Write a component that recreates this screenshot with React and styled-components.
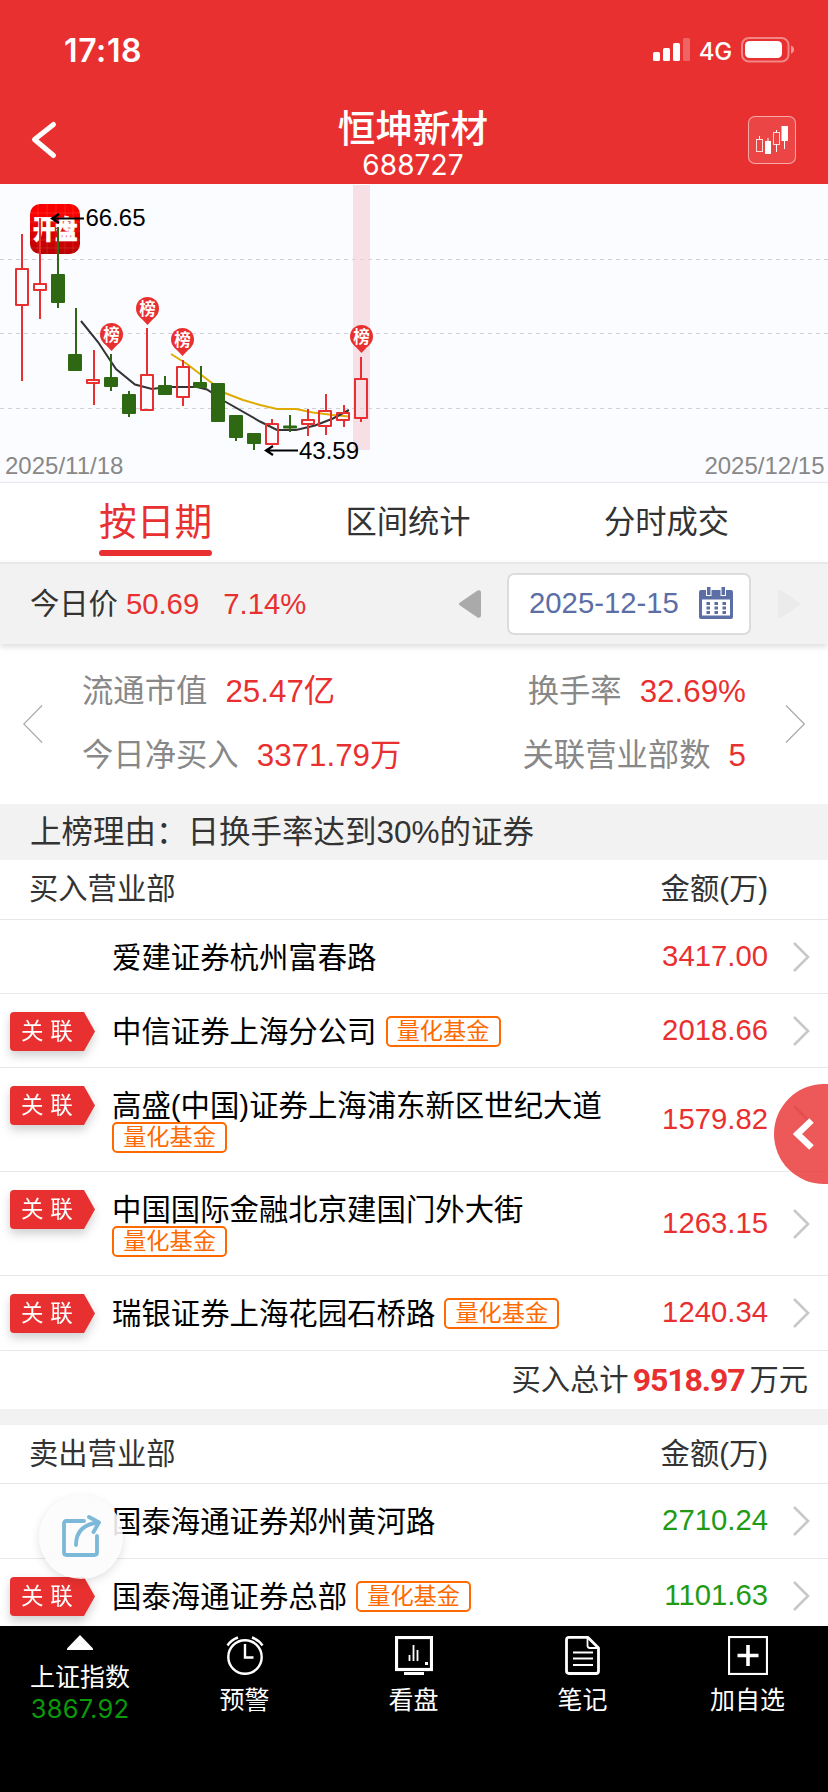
import React from "react";
import styled, { createGlobalStyle } from "styled-components";

const RED = "#e93030";
const GREEN = "#2f6813";
const LATIN = '"Liberation Sans", "Noto Sans CJK SC", sans-serif';
const UI = 'Inter, "Noto Sans CJK SC", sans-serif';

const GlobalStyle = createGlobalStyle`
  * { box-sizing: border-box; }
  body { margin: 0; background: #fff; }
`;

const Page = styled.div`
  position: relative;
  width: 828px;
  height: 1792px;
  overflow: hidden;
  display: flex;
  flex-direction: column;
  background: #fff;
  color: #333;
  font-family: ${LATIN};
  font-size: 29.3px;
  white-space: nowrap;
`;

const Header = styled.header`
  flex: none;
  height: 184px;
  background: ${RED};
  color: #fff;
  font-family: ${UI};
`;

const StatusBar = styled.div`
  display: flex;
  align-items: center;
  justify-content: space-between;
  height: 100px;
  padding: 0 34px 0 64px;
`;

const Clock = styled.div`
  font-size: 32px;
  font-weight: 600;
  letter-spacing: 0.6px;
`;

const StatusIcons = styled.div`
  display: flex;
  align-items: center;
`;

const Network = styled.span`
  margin: 2px 9px 0 8px;
  font-size: 24px;
  font-weight: 500;
  letter-spacing: -0.2px;
`;

const TitleBar = styled.div`
  display: flex;
  align-items: flex-start;
  justify-content: space-between;
  height: 84px;
  padding: 0 32px 0 30px;
`;

const BackIcon = styled.svg`
  margin-top: 20px;
  margin-right: 20px;
`;

const Titles = styled.div`
  text-align: center;
`;

const StockName = styled.div`
  margin-top: 7px;
  font-size: 37.6px;
  font-weight: 500;
  line-height: 44px;
`;

const StockCode = styled.div`
  margin-top: -1px;
  font-size: 28px;
  line-height: 30px;
  letter-spacing: 0.1px;
`;

const ChartButton = styled.button`
  width: 48px;
  height: 48px;
  margin-top: 16px;
  padding: 0;
  border: 1px solid rgba(255, 255, 255, 0.55);
  border-radius: 7px;
  background: rgba(255, 255, 255, 0.1);
`;

const ChartPanel = styled.section`
  flex: none;
  height: 299px;
  background: #fbfcff;
  border-bottom: 1px solid #e6e8ec;
  svg { display: block; }
`;

const Tabs = styled.nav`
  flex: none;
  display: flex;
  justify-content: space-between;
  height: 79px;
  padding: 0 99px;
`;

const Tab = styled.div`
  display: flex;
  flex-direction: column;
  height: 73px;
  line-height: ${(p) => (p.$active ? 78 : 80)}px;
  font-size: ${(p) => (p.$active ? 37.7 : 31.25)}px;
  color: ${(p) => (p.$active ? RED : "#333")};
`;

const TabLine = styled.i`
  height: 6px;
  margin-top: -11px;
  border-radius: 3px;
  background: ${RED};
`;

const PriceBar = styled.section`
  flex: none;
  display: flex;
  align-items: center;
  height: 82px;
  padding: 0 28px 0 30px;
  background: #f2f2f2;
  border-top: 2px solid #e8e8e8;
  box-shadow: 0 3px 6px rgba(0, 0, 0, 0.13);
`;

const PriceLabel = styled.span`
  margin-bottom: 6px;
`;

const Price = styled.span`
  margin-left: ${(p) => p.$gap}px;
  margin-bottom: 1px;
  color: ${RED};
`;

const DateBox = styled.div`
  display: flex;
  align-items: center;
  justify-content: space-between;
  width: 244px;
  height: 62px;
  margin: 0 27px 0 26px;
  padding: 0 16px 3px 20px;
  border: 2px solid #dcdcdc;
  border-radius: 7px;
  background: #fff;
  color: #5b6ea5;
`;

const PrevArrow = styled.svg`
  margin-left: auto;
`;

const Stats = styled.section`
  flex: none;
  display: flex;
  align-items: center;
  height: 160px;
  padding: 0 23px;
  font-size: 31.35px;
`;

const StatGrid = styled.div`
  flex: 1;
  display: flex;
  flex-direction: column;
  gap: 24px;
  padding: 0 39px;
  margin-top: -1px;
`;

const StatRow = styled.div`
  display: flex;
  justify-content: space-between;
  line-height: 40px;
`;

const Stat = styled.div`
  display: flex;
  gap: 18px;
  color: #888;
`;

const StatValue = styled.span`
  color: ${RED};
`;

const Reason = styled.div`
  flex: none;
  height: 56px;
  padding-left: 30px;
  background: #f2f2f2;
  font-size: 31.5px;
  line-height: 56px;
`;

const TableHead = styled.div`
  flex: none;
  display: flex;
  justify-content: space-between;
  height: ${(p) => p.$height}px;
  padding: 0 60px 0 29px;
  border-bottom: 1px solid #e8e8e8;
  line-height: 57px;
`;

const Row = styled.div`
  flex: none;
  display: flex;
  height: ${(p) => p.$height}px;
  border-bottom: 1px solid #e8e8e8;
`;

const BadgeSlot = styled.div`
  flex: none;
  width: 112px;
  padding: 18px 0 0 10px;
`;

const BadgeShadow = styled.div`
  width: 85px;
  filter: drop-shadow(0 5px 5px rgba(0, 0, 0, 0.18));
`;

const Badge = styled.div`
  height: 39px;
  padding-left: 11px;
  border-radius: 4px 0 0 4px;
  background: ${RED};
  clip-path: polygon(0 0, 74px 0, 85px 50%, 74px 100%, 0 100%);
  color: #fff;
  font-size: 22.5px;
  line-height: 39px;
  word-spacing: 0.6px;
`;

const Broker = styled.div`
  flex: none;
  width: 510px;
  display: flex;
  flex-wrap: wrap;
  align-content: flex-start;
  align-items: center;
  column-gap: 9px;
  padding-top: 20px;
  color: #000;
  font-size: 29.4px;
`;

const BrokerName = styled.div`
  height: 34px;
  line-height: 36px;
`;

const Tag = styled.div`
  width: 115px;
  height: 31px;
  border: 2px solid #ff6a00;
  border-radius: 5px;
  color: #ff6a00;
  font-size: 23.2px;
  line-height: 27px;
  text-align: center;
`;

const Amount = styled.div`
  flex: 1;
  align-self: center;
  margin-top: -2px;
  text-align: right;
  color: ${(p) => (p.$sell ? "#229b14" : RED)};
`;

const Chevron = styled.svg`
  flex: none;
  align-self: center;
  margin: 0 18px 0 25px;
`;

const Total = styled.div`
  flex: none;
  display: flex;
  justify-content: flex-end;
  height: 58px;
  padding-right: 20px;
  line-height: 58px;
`;

const TotalValue = styled.b`
  margin: 0 5px 0 4px;
  color: ${RED};
  font: 700 32px/58px Roboto, sans-serif;
  letter-spacing: -1.1px;
`;

const Divider = styled.div`
  flex: none;
  height: 16px;
  background: #f2f2f2;
`;

const Listing = styled.main`
  flex: 1;
  min-height: 0;
  overflow: hidden;
  display: flex;
  flex-direction: column;
`;

const Footer = styled.footer`
  flex: none;
  display: grid;
  grid-template-columns: 160px 169px 169px 169px 161px;
  height: 166px;
  background: #000;
  color: #fff;
  font-family: ${UI};
  font-size: 25px;
`;

const FooterItem = styled.div`
  display: flex;
  flex-direction: column;
  align-items: center;
  padding-top: ${(p) => p.$top}px;
  line-height: 30px;
  svg { margin-bottom: ${(p) => p.$gap}px; }
`;

const IndexValue = styled.span`
  margin-top: 2px;
  color: #0a9a0a;
  font-size: 25.5px;
  letter-spacing: 0.2px;
`;

const SideHandle = styled.div`
  position: absolute;
  top: 1084px;
  right: 0;
  display: flex;
  align-items: center;
  width: 54px;
  height: 100px;
  padding-left: 19px;
  border-radius: 50px 0 0 50px;
  background: rgba(233, 48, 48, 0.8);
`;

const ShareButton = styled.div`
  position: absolute;
  top: 1495px;
  left: 39px;
  display: flex;
  align-items: center;
  justify-content: center;
  width: 84px;
  height: 84px;
  padding-bottom: 4px;
  border-radius: 50%;
  background: rgba(252, 252, 252, 0.88);
  box-shadow: 0 3px 10px rgba(0, 0, 0, 0.12);
`;

// x = wick centre, [high, low] = wick, [top, bottom] = body
const candles = [
  [22, 234, 381, 268, 306, 1], [40, 218, 319, 283, 291, 1], [58, 227, 308, 274, 303, 0],
  [76, 308, 371, 354, 371, 0], [94, 350, 405, 379, 384, 1], [111, 354, 391, 377, 387, 0],
  [129, 391, 417, 394, 414, 0], [147, 328, 411, 374, 411, 1], [165, 376, 395, 385, 395, 0],
  [183, 360, 406, 366, 398, 1], [201, 366, 388, 382, 388, 0], [218, 383, 422, 383, 422, 0],
  [236, 415, 441, 415, 438, 0], [254, 433, 450, 433, 444, 0], [272, 419, 445, 423, 445, 1],
  [290, 415, 432, 425.5, 428.5, 0], [308, 409, 436, 419, 425, 1], [326, 394, 435, 410, 427, 1],
  [344, 405, 427, 412, 421, 1], [361, 357, 422, 378, 419, 1],
];

const pins = [[111.5, 335.5], [147.5, 309.5], [182.5, 340.5], [361.5, 337.5]];

function Candle({ data: [x, high, low, top, bottom, up] }) {
  const color = up ? RED : GREEN;
  const left = x === 76 || x === 326 || x === 344 || x === 94 || x === 201 ? x - 8 : x - 7;
  return (
    <g stroke={color} strokeWidth="2">
      <path d={`M${x} ${high}V${top + 1}M${x} ${bottom - 1}V${low}`} />
      <rect x={left + 1} y={top + 1} width="12" height={Math.max(bottom - top - 2, 0.5)} fill={up ? "none" : color} strokeLinejoin="round" />
    </g>
  );
}

function Pin({ x, y }) {
  return (
    <g>
      <circle cx={x} cy={y - 1} r="11.5" fill={RED} />
      <path d={`M${x - 8} ${y + 7}L${x} ${y + 15.5}L${x + 8} ${y + 7}Z`} fill={RED} />
      <text x={x} y={y + 5} fontSize="16.5" fontWeight="700" fill="#fff" textAnchor="middle">榜</text>
    </g>
  );
}

function PriceChart() {
  return (
    <svg width="828" height="298" viewBox="0 184 828 298" fill="none">
      <defs>
        <linearGradient id="logo" x1="0" y1="0" x2="0" y2="1">
          <stop offset="0.2" stopColor="#fb0000" />
          <stop offset="1" stopColor="#b80000" />
        </linearGradient>
      </defs>
      <rect x="30" y="204" width="50" height="50" rx="10" fill="url(#logo)" />
      <path d="M38 204v50M47 204v50M56 204v50M65 204v50M73 204v50M30 213h50M30 222h50M30 231h50M30 240h50M30 248h50" stroke="#fff" strokeOpacity="0.12" />
      <text transform="translate(33 239) scale(1 1.17)" fontSize="22.3" fontWeight="900" fill="#fff" stroke="#fff" strokeWidth="0.6">开盘</text>
      {[259.5, 333.5, 408.5].map((y) => (
        <path key={y} d={`M0 ${y}H828`} stroke="#cfd1d6" strokeDasharray="4 4" />
      ))}
      <rect x="353" y="185" width="17" height="265" fill="#f3cdd6" fillOpacity="0.62" />
      <path d="M171 354L187 364L200 374L212 383L225 393L243 400L260 405L277 409H296L313 412.5L333 415L349 416.5" stroke="#dfab00" strokeWidth="2" />
      <path d="M81 321L98 342L116 369L135 384.5L152 389L167 387H197L207 389.5L225 401.5L260 421.5L277 430H296L315 425.5L333 418.5L349 410" stroke="#333" strokeWidth="2" />
      {candles.map((c) => <Candle key={c[0]} data={c} />)}
      {pins.map(([x, y]) => <Pin key={x} x={x} y={y} />)}
      <path d="M84 218.5H53M59 214L52 218.5L59 223M298 450.5H267M273 446L266 450.5L273 455" stroke="#000" strokeWidth="2.2" />
      <g fontSize="24" fill="#000">
        <text x="85.5" y="225.5">66.65</text>
        <text x="299" y="458.5">43.59</text>
      </g>
      <g fontSize="24" fill="#888">
        <text x="5" y="474">2025/11/18</text>
        <text x="824.5" y="474" textAnchor="end">2025/12/15</text>
      </g>
    </svg>
  );
}

const SignalIcon = () => (
  <svg width="38" height="26" viewBox="653 37 38 26" fill="#fff">
    <rect x="653" y="52" width="7" height="9" rx="1.5" />
    <rect x="663" y="48" width="7" height="13" rx="1.5" />
    <rect x="673" y="43" width="7" height="18" rx="1.5" />
    <rect x="683" y="38" width="7" height="23" rx="1.5" opacity="0.25" />
  </svg>
);

const BatteryIcon = () => (
  <svg width="53" height="26" viewBox="741 37 53 26" fill="#fff">
    <rect x="742" y="38" width="46.5" height="23.5" rx="7" fill="none" stroke="#fff" strokeOpacity="0.42" strokeWidth="2" />
    <rect x="745" y="41" width="37" height="17" rx="4.5" />
    <path d="M791 45.5q3 1 3 4t-3 4z" opacity="0.5" />
  </svg>
);

const CandlesIcon = () => (
  <svg width="46" height="46" viewBox="749 117 46 46" fill="none" stroke="#fff" strokeWidth="1">
    <path d="M759.5 136v3M768 138v4M776.5 130v2M776.5 144v8M784.5 140v9" />
    <rect x="756.5" y="139.5" width="6" height="12" strokeOpacity="0.8" />
    <rect x="765" y="141" width="6" height="13" fill="#fff" stroke="none" />
    <rect x="773.5" y="132.5" width="6" height="12" strokeOpacity="0.8" />
    <rect x="781.5" y="126" width="6.5" height="15" fill="#fff" stroke="none" />
  </svg>
);

const CalendarIcon = () => (
  <svg width="34" height="32" viewBox="0 0 34 32" fill="#5b6ea5">
    <path fillRule="evenodd" d="M2 3H32q2 0 2 2V30q0 2-2 2H2q-2 0-2-2V5q0-2 2-2zM3 12.5V28.5H31V12.5z" />
    <rect x="7.5" y="-1" width="4.5" height="9.5" stroke="#fff" />
    <rect x="22" y="-1" width="4.5" height="9.5" stroke="#fff" />
    {[7.5, 15.5, 23.5].map((x) => [15, 19.5, 24].map((y) => (
      <rect key={`${x}-${y}`} x={x} y={y} width="3.5" height="3" />
    )))}
  </svg>
);

const StatArrow = ({ right }) => (
  <svg width="20" height="38" viewBox="0 0 20 38" fill="none" stroke="#aaa" strokeWidth="1.2">
    <path d={right ? "M1 .5L19.3 19L1 37.5" : "M19 .5L.8 19L19 37.5"} />
  </svg>
);

function BrokerRow({ name, related, quant, amount, sell, height }) {
  return (
    <Row $height={height}>
      <BadgeSlot>{related && <BadgeShadow><Badge>关 联</Badge></BadgeShadow>}</BadgeSlot>
      <Broker>
        <BrokerName>{name}</BrokerName>
        {quant && <Tag>量化基金</Tag>}
      </Broker>
      <Amount $sell={sell}>{amount}</Amount>
      <Chevron width="17" height="30" viewBox="0 0 17 30" fill="none" stroke="#c8c8c8" strokeWidth="2.6">
        <path d="M1 1L15 15L1 29" />
      </Chevron>
    </Row>
  );
}

const buyers = [
  { name: "爱建证券杭州富春路", amount: "3417.00", height: 74 },
  { name: "中信证券上海分公司", amount: "2018.66", height: 74, related: true, quant: true },
  { name: "高盛(中国)证券上海浦东新区世纪大道", amount: "1579.82", height: 104, related: true, quant: true },
  { name: "中国国际金融北京建国门外大街", amount: "1263.15", height: 104, related: true, quant: true },
  { name: "瑞银证券上海花园石桥路", amount: "1240.34", height: 75, related: true, quant: true },
];

const sellers = [
  { name: "国泰海通证券郑州黄河路", amount: "2710.24", height: 75 },
  { name: "国泰海通证券总部", amount: "1101.63", height: 74, related: true, quant: true },
];

export default function App() {
  return (
    <Page>
      <GlobalStyle />
      <Header>
        <StatusBar>
          <Clock>17:18</Clock>
          <StatusIcons>
            <SignalIcon />
            <Network>4G</Network>
            <BatteryIcon />
          </StatusIcons>
        </StatusBar>
        <TitleBar>
          <BackIcon width="28" height="40" viewBox="30 120 28 40" fill="none" stroke="#fff" strokeWidth="5" strokeLinecap="round" strokeLinejoin="round">
            <path d="M53.5 124.5L34.5 139.5L53.5 155.5" />
          </BackIcon>
          <Titles>
            <StockName>恒坤新材</StockName>
            <StockCode>688727</StockCode>
          </Titles>
          <ChartButton><CandlesIcon /></ChartButton>
        </TitleBar>
      </Header>

      <ChartPanel><PriceChart /></ChartPanel>

      <Tabs>
        <Tab $active>按日期<TabLine /></Tab>
        <Tab>区间统计</Tab>
        <Tab>分时成交</Tab>
      </Tabs>

      <PriceBar>
        <PriceLabel>今日价</PriceLabel>
        <Price $gap={8}>50.69</Price>
        <Price $gap={24}>7.14%</Price>
        <PrevArrow width="22" height="28" viewBox="0 0 22 28" fill="#aaa">
          <path d="M1 12.5L18.5 .6Q22-1 22 3V25Q22 29 18.5 27.4L1 15.5Q-1 14 1 12.5z" />
        </PrevArrow>
        <DateBox>
          2025-12-15
          <CalendarIcon />
        </DateBox>
        <svg width="22" height="28" viewBox="0 0 22 28" fill="#ebebeb">
          <path d="M21 12.5L3.5 .6Q0-1 0 3V25Q0 29 3.5 27.4L21 15.5Q23 14 21 12.5z" />
        </svg>
      </PriceBar>

      <Stats>
        <StatArrow />
        <StatGrid>
          <StatRow>
            <Stat>流通市值<StatValue>25.47亿</StatValue></Stat>
            <Stat>换手率<StatValue>32.69%</StatValue></Stat>
          </StatRow>
          <StatRow>
            <Stat>今日净买入<StatValue>3371.79万</StatValue></Stat>
            <Stat>关联营业部数<StatValue>5</StatValue></Stat>
          </StatRow>
        </StatGrid>
        <StatArrow right />
      </Stats>

      <Reason>上榜理由：日换手率达到30%的证券</Reason>

      <Listing>
        <TableHead $height={60}><span>买入营业部</span><span>金额(万)</span></TableHead>
        {buyers.map((b) => <BrokerRow key={b.name} {...b} />)}
        <Total>买入总计<TotalValue>9518.97</TotalValue>万元</Total>
        <Divider />
        <TableHead $height={59}><span>卖出营业部</span><span>金额(万)</span></TableHead>
        {sellers.map((s) => <BrokerRow key={s.name} sell {...s} />)}
      </Listing>

      <Footer>
        <FooterItem $top={9} $gap={12}>
          <svg width="26" height="15" viewBox="0 0 26 15" fill="#fff"><path d="M13 0L26 13.5V15H0V13.5z" /></svg>
          <span>上证指数</span>
          <IndexValue>3867.92</IndexValue>
        </FooterItem>
        <FooterItem $top={10} $gap={10}>
          <svg width="38" height="39" viewBox="0 0 38 39" fill="none" stroke="#fff" strokeWidth="2.4">
            <circle cx="19" cy="21" r="16.7" />
            <path d="M19 8V21.5H27.5M1.5 9.5Q5 4 12 1.5M36.5 9.5Q33 4 26 1.5" />
          </svg>
          <span>预警</span>
        </FooterItem>
        <FooterItem $top={10} $gap={10}>
          <svg width="38" height="39" viewBox="0 0 38 39" fill="none" stroke="#fff" strokeWidth="3">
            <rect x="1.5" y="1.5" width="35" height="32" strokeWidth="3.2" />
            <path d="M9 37.5H29" strokeWidth="3" />
            <path d="M14.5 19V25M18.5 9V25M22.5 14V25" strokeWidth="1.8" />
            <path d="M30 27.5H33" strokeWidth="3" />
          </svg>
          <span>看盘</span>
        </FooterItem>
        <FooterItem $top={10} $gap={10}>
          <svg width="35" height="39" viewBox="0 0 35 39" fill="none" stroke="#fff" strokeWidth="2.8" strokeLinejoin="round">
            <path d="M4 1.4H23L33.5 12V35Q33.5 37.5 31 37.5H4Q1.5 37.5 1.5 35V4Q1.5 1.4 4 1.4z" />
            <path d="M22.5 2V9.5Q22.5 12 25 12H33" strokeWidth="1.8" />
            <path d="M8 16.5H28M8 22.5H28M8 29H28" strokeWidth="2" />
          </svg>
          <span>笔记</span>
        </FooterItem>
        <FooterItem $top={10} $gap={10}>
          <svg width="40" height="39" viewBox="0 0 40 39" fill="none" stroke="#fff">
            <rect x="1" y="1" width="38" height="37" strokeWidth="2.2" />
            <path d="M9.5 19.5H30.5M20 9V30" strokeWidth="3.6" />
          </svg>
          <span>加自选</span>
        </FooterItem>
      </Footer>

      <SideHandle>
        <svg width="21" height="32" viewBox="0 0 21 32" fill="none" stroke="#fff" strokeWidth="6.5">
          <path d="M18.5 2.5L4.5 16L18.5 29.5" />
        </svg>
      </SideHandle>

      <ShareButton>
        <svg width="40" height="43" viewBox="0 0 40 43" fill="none" stroke="#7cb8d8" strokeWidth="3.8" strokeLinecap="round" strokeLinejoin="round">
          <path d="M23 7H5.5Q3 7 3 9.5V38.5Q3 41 5.5 41H33.5Q36 41 36 38.5V22" />
          <path d="M15 31C15 18 22 10 38 8.5M28 3L38 8.5L32.5 18" />
        </svg>
      </ShareButton>
    </Page>
  );
}
